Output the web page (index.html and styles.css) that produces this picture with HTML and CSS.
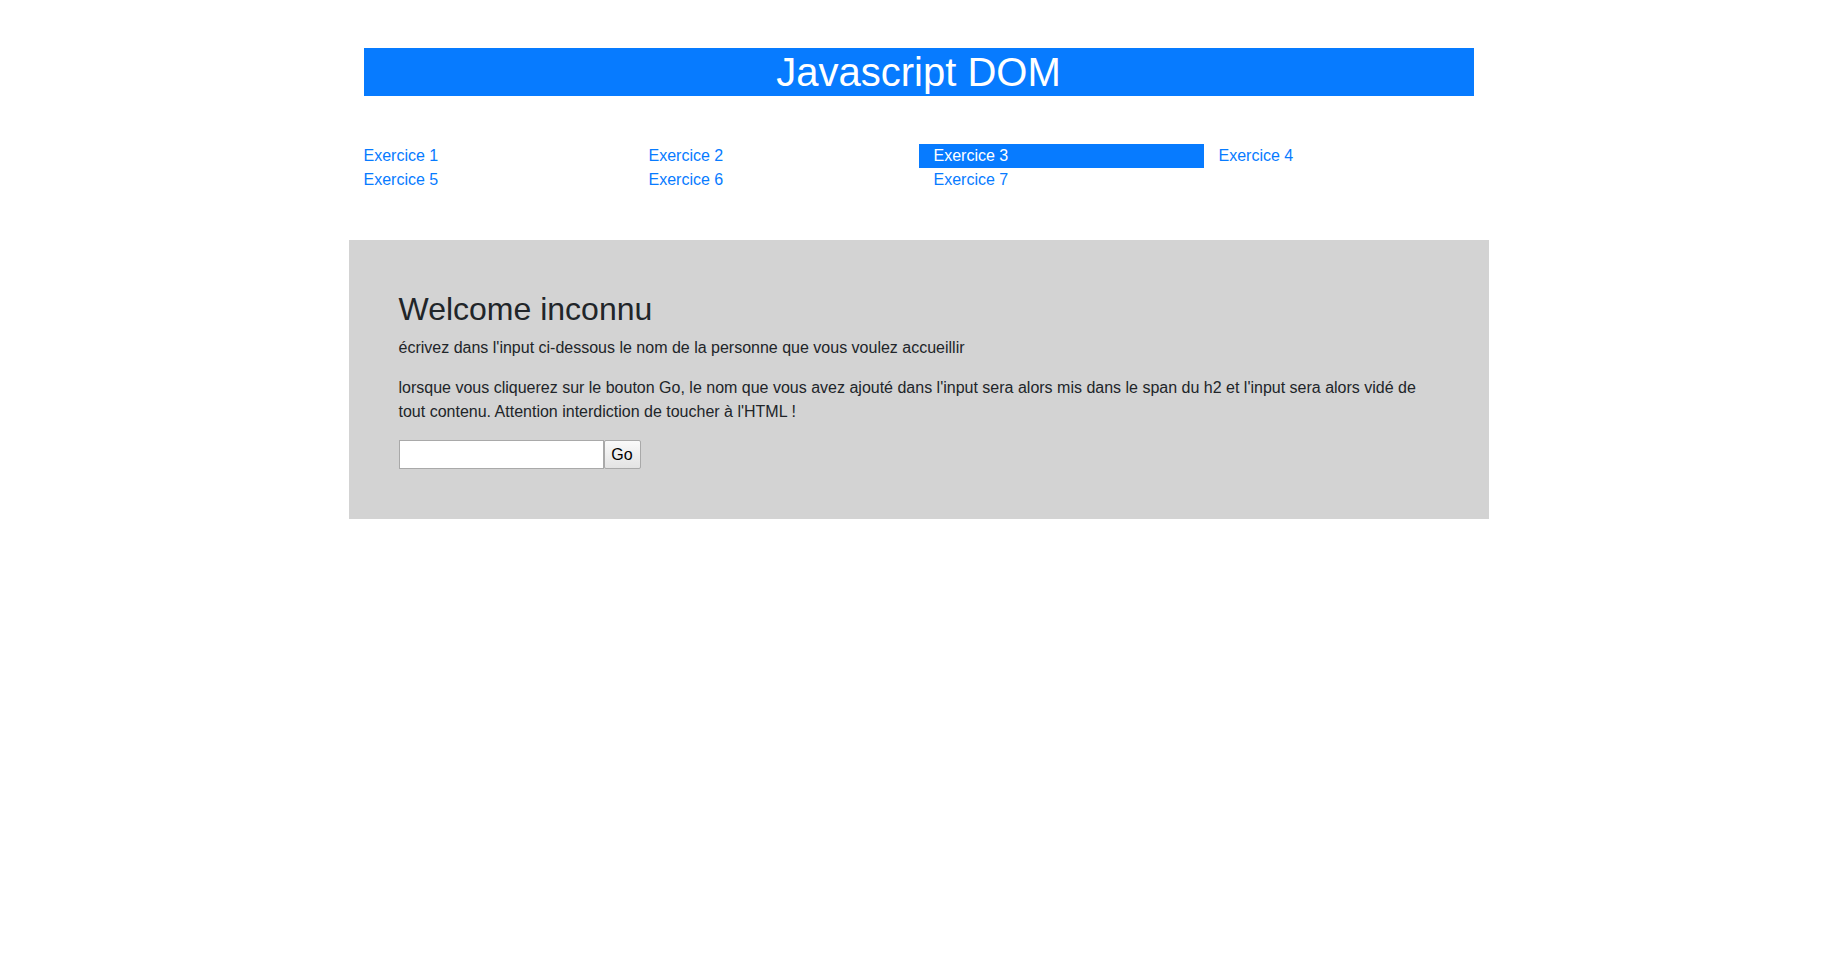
FILE: index.html
```html
<!DOCTYPE html>
<html lang="fr">
<head>
<meta charset="utf-8">
<title>Javascript DOM</title>
<link rel="stylesheet" href="styles.css">
</head>
<body>
<header class="container">
  <h1 class="title">Javascript DOM</h1>
  <nav class="menu">
    <a class="menu-item" href="#">Exercice 1</a>
    <a class="menu-item" href="#">Exercice 2</a>
    <a class="menu-item active" href="#">Exercice 3</a>
    <a class="menu-item" href="#">Exercice 4</a>
    <a class="menu-item" href="#">Exercice 5</a>
    <a class="menu-item" href="#">Exercice 6</a>
    <a class="menu-item" href="#">Exercice 7</a>
  </nav>
</header>
<main class="exercise">
  <h2 class="welcome">Welcome <span>inconnu</span></h2>
  <p class="text">écrivez dans l'input ci-dessous le nom de la personne que vous voulez accueillir</p>
  <p class="text">lorsque vous cliquerez sur le bouton Go, le nom que vous avez ajouté dans l'input sera alors mis dans le span du h2 et l'input sera alors vidé de tout contenu. Attention interdiction de toucher à l'HTML !</p>
  <div class="form">
    <input class="name-input" type="text">
    <button class="go-btn" type="button">Go</button>
  </div>
</main>
</body>
</html>
```

FILE: styles.css
```css
* {
  box-sizing: border-box;
}

body {
  margin: 0;
  font-family: "Liberation Sans", Arial, sans-serif;
  font-size: 16px;
  line-height: 1.5;
  color: #212529;
  background: #fff;
}

.container {
  width: 1140px;
  margin: 0 auto;
  padding: 48px 15px 0;
}

.title {
  margin: 0;
  background: #077bff;
  color: #fff;
  font-size: 40px;
  font-weight: 400;
  line-height: 48px;
  text-align: center;
}

.menu {
  display: grid;
  grid-template-columns: repeat(4, 1fr);
  margin: 48px -15px 0;
}

.menu-item {
  display: block;
  padding: 0 15px;
  line-height: 24px;
  color: #077bff;
  text-decoration: none;
}

.menu-item.active {
  background: #077bff;
  color: #fff;
}

.exercise {
  width: 1140px;
  margin: 48px auto 0;
  padding: 50px;
  background: #d3d3d3;
}

.welcome {
  margin: 0 0 8px;
  font-size: 32px;
  font-weight: 400;
  line-height: 1.2;
}

.text {
  margin: 0 0 16px;
}

.form {
  display: flex;
}

.name-input {
  width: 205px;
  height: 29px;
  margin: 0;
  padding: 1px 2px;
  border: 1px solid #a9a9a9;
  background: #fff;
  font: 16px "Liberation Sans", Arial, sans-serif;
}

.go-btn {
  width: 37px;
  height: 29px;
  margin: 0;
  padding: 0;
  border: 1px solid #a9a9a9;
  border-radius: 2px;
  background: linear-gradient(#fafafa, #e3e3e3);
  color: #000;
  font: 16px "Liberation Sans", Arial, sans-serif;
}
```
